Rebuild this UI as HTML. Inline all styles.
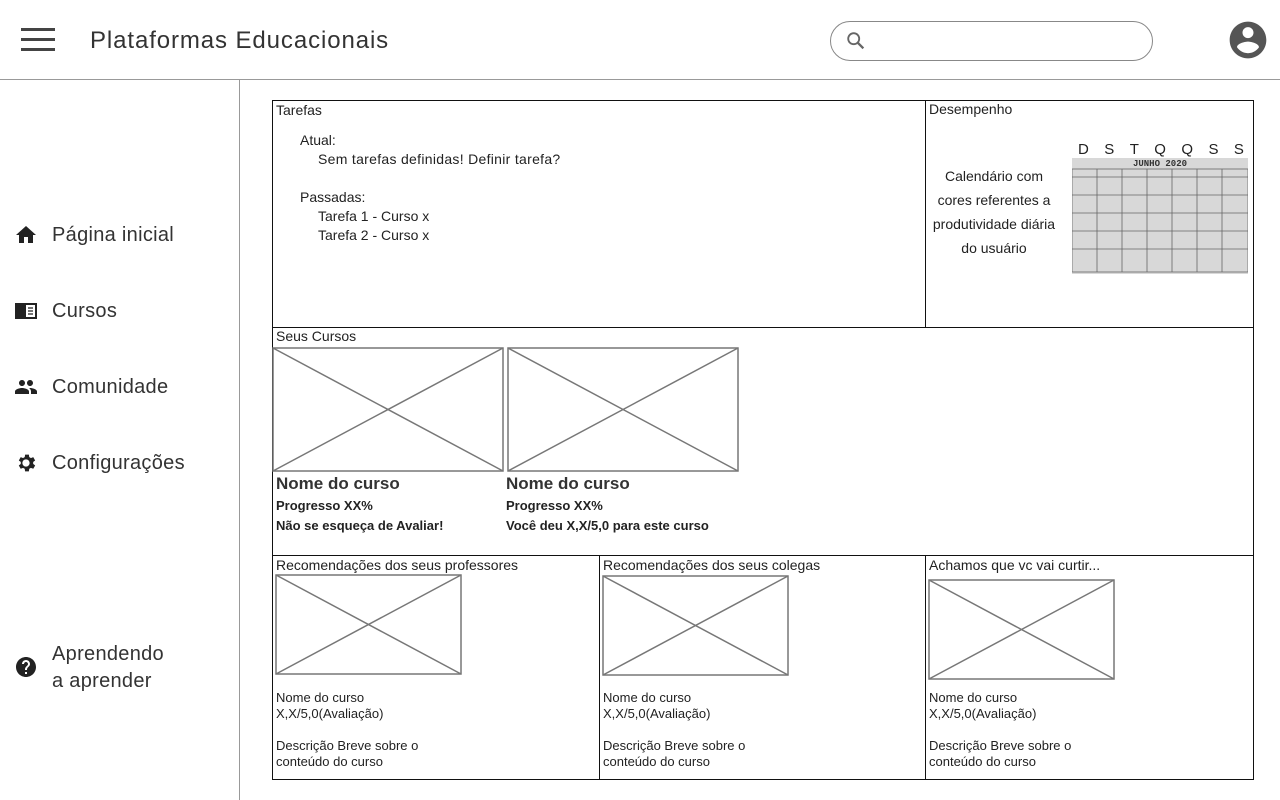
<!DOCTYPE html>
<html><head><meta charset="utf-8"><style>
*{margin:0;padding:0;box-sizing:border-box}
body{width:1280px;height:800px;background:#fff;font-family:"Liberation Sans","DejaVu Sans",sans-serif;color:#222;position:relative;overflow:hidden}
.a{position:absolute}
.t{position:absolute;font-size:14px;white-space:nowrap}
.ln{position:absolute;background:#111}
.nav{position:absolute;left:52px;font-size:20px;color:#333;letter-spacing:0.3px}
.ic{position:absolute;left:14px}
.b{font-weight:bold;font-size:13px}
</style></head><body>
<div class="a" style="left:21px;top:28px;width:34px;height:3px;background:#444"></div>
<div class="a" style="left:21px;top:38px;width:34px;height:3px;background:#444"></div>
<div class="a" style="left:21px;top:48px;width:34px;height:3px;background:#444"></div>
<div class="t" style="left:90px;top:27px;font-size:24px;color:#333;letter-spacing:0.9px">Plataformas Educacionais</div>
<div class="a" style="left:830px;top:21px;width:323px;height:40px;border:1px solid #888;border-radius:20px"></div>
<svg class="a" style="left:845px;top:30px" width="22" height="22" viewBox="0 0 24 24"><circle cx="9.5" cy="9.5" r="6" fill="none" stroke="#666" stroke-width="2"/><path d="M14 14l6 6" stroke="#666" stroke-width="2.5"/></svg>
<svg class="a" style="left:1226px;top:18px" width="44" height="44" viewBox="0 0 24 24"><path fill="#555" d="M12 2C6.48 2 2 6.48 2 12s4.48 10 10 10 10-4.48 10-10S17.52 2 12 2zm0 3c1.66 0 3 1.34 3 3s-1.34 3-3 3-3-1.34-3-3 1.34-3 3-3zm0 14.2c-2.5 0-4.71-1.28-6-3.22.03-1.99 4-3.08 6-3.08 1.99 0 5.97 1.09 6 3.08-1.29 1.94-3.5 3.22-6 3.22z"/></svg>
<div class="a" style="left:0;top:79px;width:1280px;height:1px;background:#999"></div>
<div class="a" style="left:239px;top:80px;width:1px;height:720px;background:#999"></div>
<svg class="ic" style="top:223px" width="24" height="24" viewBox="0 0 24 24"><path fill="#222" d="M10 20v-6h4v6h5v-8h3L12 3 2 12h3v8z"/></svg>
<div class="nav" style="top:224px">Página inicial</div>
<svg class="ic" style="top:299px" width="24" height="24" viewBox="0 0 24 24"><path fill="#222" d="M1 4h22v16H1z"/><rect x="12" y="6" width="9" height="12" fill="#fff"/><path d="M14 9h5M14 12h5M14 15h5" stroke="#222" stroke-width="1.3"/></svg>
<div class="nav" style="top:300px">Cursos</div>
<svg class="ic" style="top:375px" width="24" height="24" viewBox="0 0 24 24"><path fill="#222" d="M16 11c1.66 0 2.99-1.34 2.99-3S17.66 5 16 5c-1.66 0-3 1.34-3 3s1.34 3 3 3zm-8 0c1.66 0 2.99-1.34 2.99-3S9.66 5 8 5C6.34 5 5 6.34 5 8s1.34 3 3 3zm0 2c-2.33 0-7 1.17-7 3.5V19h14v-2.5c0-2.33-4.67-3.5-7-3.5zm8 0c-.29 0-.62.02-.97.05 1.16.84 1.97 1.97 1.97 3.45V19h6v-2.5c0-2.33-4.67-3.5-7-3.5z"/></svg>
<div class="nav" style="top:376px">Comunidade</div>
<svg class="ic" style="top:451px" width="24" height="24" viewBox="0 0 24 24"><path fill="#222" d="M19.14 12.94c.04-.3.06-.61.06-.94s-.02-.64-.07-.94l2.03-1.58-1.92-3.32-2.39.96c-.5-.38-1.03-.7-1.62-.94L14.9 3.6h-3.8l-.36 2.54c-.59.24-1.13.57-1.62.94l-2.39-.96-1.92 3.32 2.03 1.58c-.05.3-.09.63-.09.94s.02.64.07.94l-2.03 1.58 1.92 3.32 2.39-.96c.5.38 1.03.7 1.62.94l.36 2.54h3.8l.36-2.54c.59-.24 1.13-.56 1.62-.94l2.39.96 1.92-3.32-2.03-1.58zM12 15.6c-1.98 0-3.6-1.62-3.6-3.6s1.62-3.6 3.6-3.6 3.6 1.62 3.6 3.6-1.62 3.6-3.6 3.6z"/></svg>
<div class="nav" style="top:452px">Configurações</div>
<svg class="ic" style="top:655px" width="24" height="24" viewBox="0 0 24 24"><path fill="#222" d="M12 2C6.48 2 2 6.48 2 12s4.48 10 10 10 10-4.48 10-10S17.52 2 12 2zm1 17h-2v-2h2v2zm2.07-7.75l-.9.92C13.45 12.9 13 13.5 13 15h-2v-.5c0-1.1.45-2.1 1.17-2.83l1.24-1.26c.37-.36.59-.86.59-1.41 0-1.1-.9-2-2-2s-2 .9-2 2H8c0-2.21 1.79-4 4-4s4 1.79 4 4c0 .88-.36 1.68-.93 2.25z"/></svg>
<div class="nav" style="top:641px;line-height:27px">Aprendendo<br>a aprender</div>
<div class="a" style="left:272px;top:100px;width:982px;height:680px;border:1px solid #111"></div>
<div class="ln" style="left:925px;top:100px;width:1px;height:227px"></div>
<div class="ln" style="left:272px;top:327px;width:982px;height:1px"></div>
<div class="ln" style="left:272px;top:555px;width:982px;height:1px"></div>
<div class="ln" style="left:599px;top:555px;width:1px;height:224px"></div>
<div class="ln" style="left:925px;top:555px;width:1px;height:224px"></div>
<div class="t" style="left:276px;top:102px">Tarefas</div>
<div class="t" style="left:300px;top:132px">Atual:</div>
<div class="t" style="left:318px;top:151px;letter-spacing:0.3px">Sem tarefas definidas! Definir tarefa?</div>
<div class="t" style="left:300px;top:189px">Passadas:</div>
<div class="t" style="left:318px;top:208px">Tarefa 1 - Curso x</div>
<div class="t" style="left:318px;top:227px">Tarefa 2 - Curso x</div>
<div class="t" style="left:929px;top:101px">Desempenho</div>
<div class="a" style="left:927px;top:164px;width:134px;text-align:center;font-size:14px;line-height:24px">Calendário com cores referentes a produtividade diária do usuário</div>
<div class="a" style="left:1078px;top:141px;width:166px;display:flex;justify-content:space-between;font-size:15px"><span>D</span><span>S</span><span>T</span><span>Q</span><span>Q</span><span>S</span><span>S</span></div>
<svg class="a" style="left:1072px;top:158px" width="176" height="118" viewBox="0 0 176 118">
<rect width="176" height="116" fill="#d8d8d8"/>
<text x="88" y="8" font-size="9" font-family="Liberation Mono" font-weight="bold" text-anchor="middle" fill="#333">JUNHO 2020</text>
<g stroke="#666" stroke-width="0.8" fill="none">
<rect x="0" y="11" width="176" height="103"/>
<path d="M0 19H176M0 37H176M0 55H176M0 73H176M0 91H176M25 11V114M50 11V114M75 11V114M100 11V114M125 11V114M150 11V114"/>
</g></svg>
<div class="t" style="left:276px;top:328px">Seus Cursos</div>
<svg class="a" style="left:272px;top:346px" width="470" height="128">
<g stroke="#777" stroke-width="1.5" fill="none">
<rect x="1" y="2" width="230" height="123"/><path d="M1 2L231 125M231 2L1 125"/>
<rect x="236" y="2" width="230" height="123"/><path d="M236 2L466 125M466 2L236 125"/>
</g></svg>
<div class="t" style="left:276px;top:474px;font-size:17px;color:#333;font-weight:bold">Nome do curso</div>
<div class="t b" style="left:276px;top:498px">Progresso XX%</div>
<div class="t b" style="left:276px;top:518px">Não se esqueça de Avaliar!</div>
<div class="t" style="left:506px;top:474px;font-size:17px;color:#333;font-weight:bold">Nome do curso</div>
<div class="t b" style="left:506px;top:498px">Progresso XX%</div>
<div class="t b" style="left:506px;top:518px">Você deu X,X/5,0 para este curso</div>
<div class="t" style="left:276px;top:557px">Recomendações dos seus professores</div>
<div class="t" style="left:603px;top:557px">Recomendações dos seus colegas</div>
<div class="t" style="left:929px;top:557px">Achamos que vc vai curtir...</div>
<svg class="a" style="left:0;top:0" width="1280" height="800">
<g stroke="#777" stroke-width="1.5" fill="none">
<rect x="276" y="575" width="185" height="99"/><path d="M276 575L461 674M461 575L276 674"/>
<rect x="603" y="576" width="185" height="99"/><path d="M603 576L788 675M788 576L603 675"/>
<rect x="929" y="580" width="185" height="99"/><path d="M929 580L1114 679M1114 580L929 679"/>
</g></svg>
<div class="a" style="left:276px;top:690px;font-size:13px;line-height:16px">Nome do curso<br>X,X/5,0(Avaliação)<br><br>Descrição Breve sobre o<br>conteúdo do curso</div>
<div class="a" style="left:603px;top:690px;font-size:13px;line-height:16px">Nome do curso<br>X,X/5,0(Avaliação)<br><br>Descrição Breve sobre o<br>conteúdo do curso</div>
<div class="a" style="left:929px;top:690px;font-size:13px;line-height:16px">Nome do curso<br>X,X/5,0(Avaliação)<br><br>Descrição Breve sobre o<br>conteúdo do curso</div>
</body></html>
